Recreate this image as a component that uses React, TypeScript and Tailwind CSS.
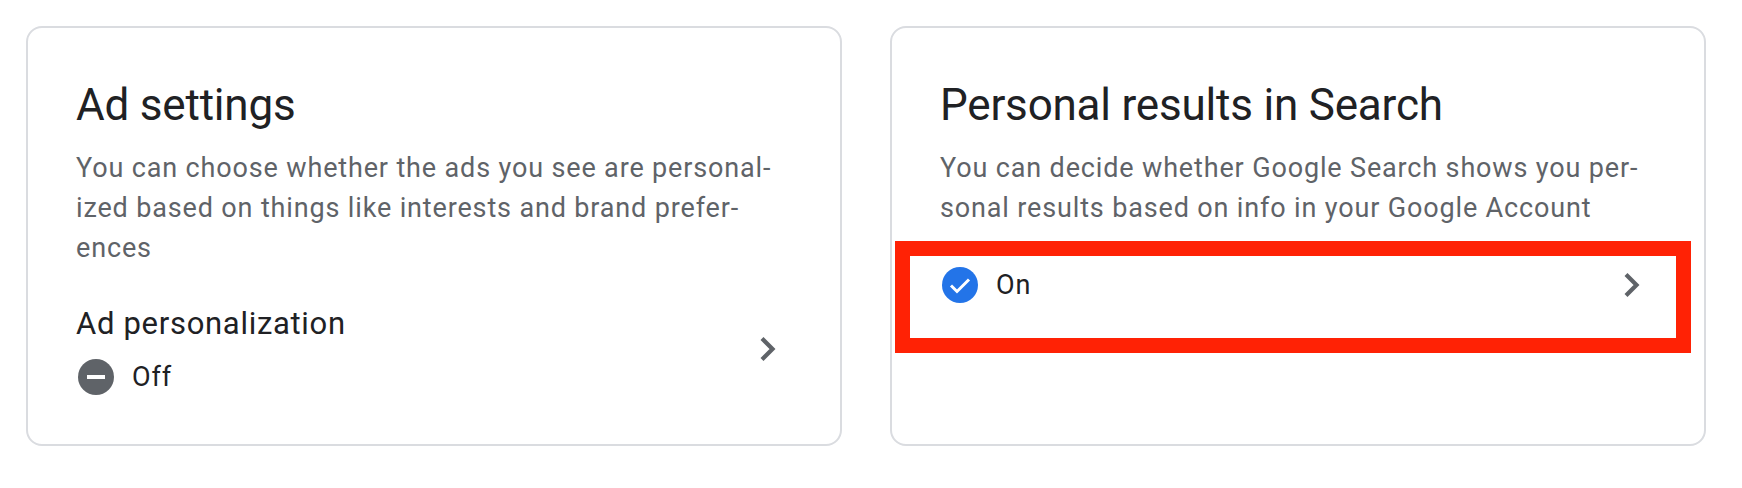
function StatusIcon({ on }: { on: boolean }) {
  if (on) {
    return (
      <svg width="36" height="36" viewBox="0 0 36 36" className="shrink-0">
        <circle cx="18" cy="18" r="18" fill="#2374e8" />
        <path d="M9 18.5l6 6L27 12.5" fill="none" stroke="#fff" strokeWidth="3" />
      </svg>
    );
  }
  return (
    <svg width="36" height="36" viewBox="0 0 36 36" className="shrink-0">
      <circle cx="18" cy="18" r="18" fill="#5f6368" />
      <rect x="9" y="16" width="18" height="4" fill="#fff" />
    </svg>
  );
}

function Chevron() {
  return (
    <svg width="24" height="30" viewBox="0 0 24 30" className="shrink-0">
      <path d="M6 4.5L16.5 15L6 25.5" fill="none" stroke="#5f6368" strokeWidth="4.2" />
    </svg>
  );
}

export default function App() {
  return (
    <div className="relative w-[1742px] h-[488px] bg-white overflow-hidden font-['Roboto',sans-serif]">
      <div className="flex gap-[48px] pl-[26px] pt-[26px]">
        {/* Ad settings */}
        <div className="w-[816px] h-[420px] border-2 border-[#dadce0] rounded-[16px] pl-[48px] pr-[48px] pt-[51px]">
          <h2 className="text-[44px] leading-[52px] tracking-[-0.2px] text-[#202124]">Ad settings</h2>
          <p className="mt-[17px] text-[27px] leading-[40px] tracking-[0.85px] text-[#5f6368] whitespace-nowrap">
            You can choose whether the ads you see are personal-<br />
            ized based on things like interests and brand prefer-<br />
            ences
          </p>
          <div className="mt-[34px] flex items-center justify-between pr-[12px]">
            <div>
              <div className="text-[31px] leading-[44px] tracking-[0.7px] text-[#202124]">Ad personalization</div>
              <div className="mt-[13px] flex items-center gap-[18px] pl-[2px]">
                <StatusIcon on={false} />
                <span className="text-[27px] leading-[36px] tracking-[0.85px] text-[#202124]">Off</span>
              </div>
            </div>
            <Chevron />
          </div>
        </div>

        {/* Personal results */}
        <div className="w-[816px] h-[420px] border-2 border-[#dadce0] rounded-[16px] pl-[48px] pr-[48px] pt-[51px]">
          <h2 className="text-[44px] leading-[52px] tracking-[-0.2px] text-[#202124]">Personal results in Search</h2>
          <p className="mt-[17px] text-[27px] leading-[40px] tracking-[0.85px] text-[#5f6368] whitespace-nowrap">
            You can decide whether Google Search shows you per-<br />
            sonal results based on info in your Google Account
          </p>
          <div className="mt-[39px] flex items-center justify-between pr-[12px]">
            <div className="flex items-center gap-[18px] pl-[2px]">
              <StatusIcon on={true} />
              <span className="text-[27px] leading-[36px] tracking-[0.85px] text-[#202124]">On</span>
            </div>
            <Chevron />
          </div>
        </div>
      </div>

      {/* red annotation box drawn over the screenshot */}
      <div className="absolute left-[895px] top-[241px] w-[796px] h-[112px] border-[15px] border-[#ff2205]" />
    </div>
  );
}
